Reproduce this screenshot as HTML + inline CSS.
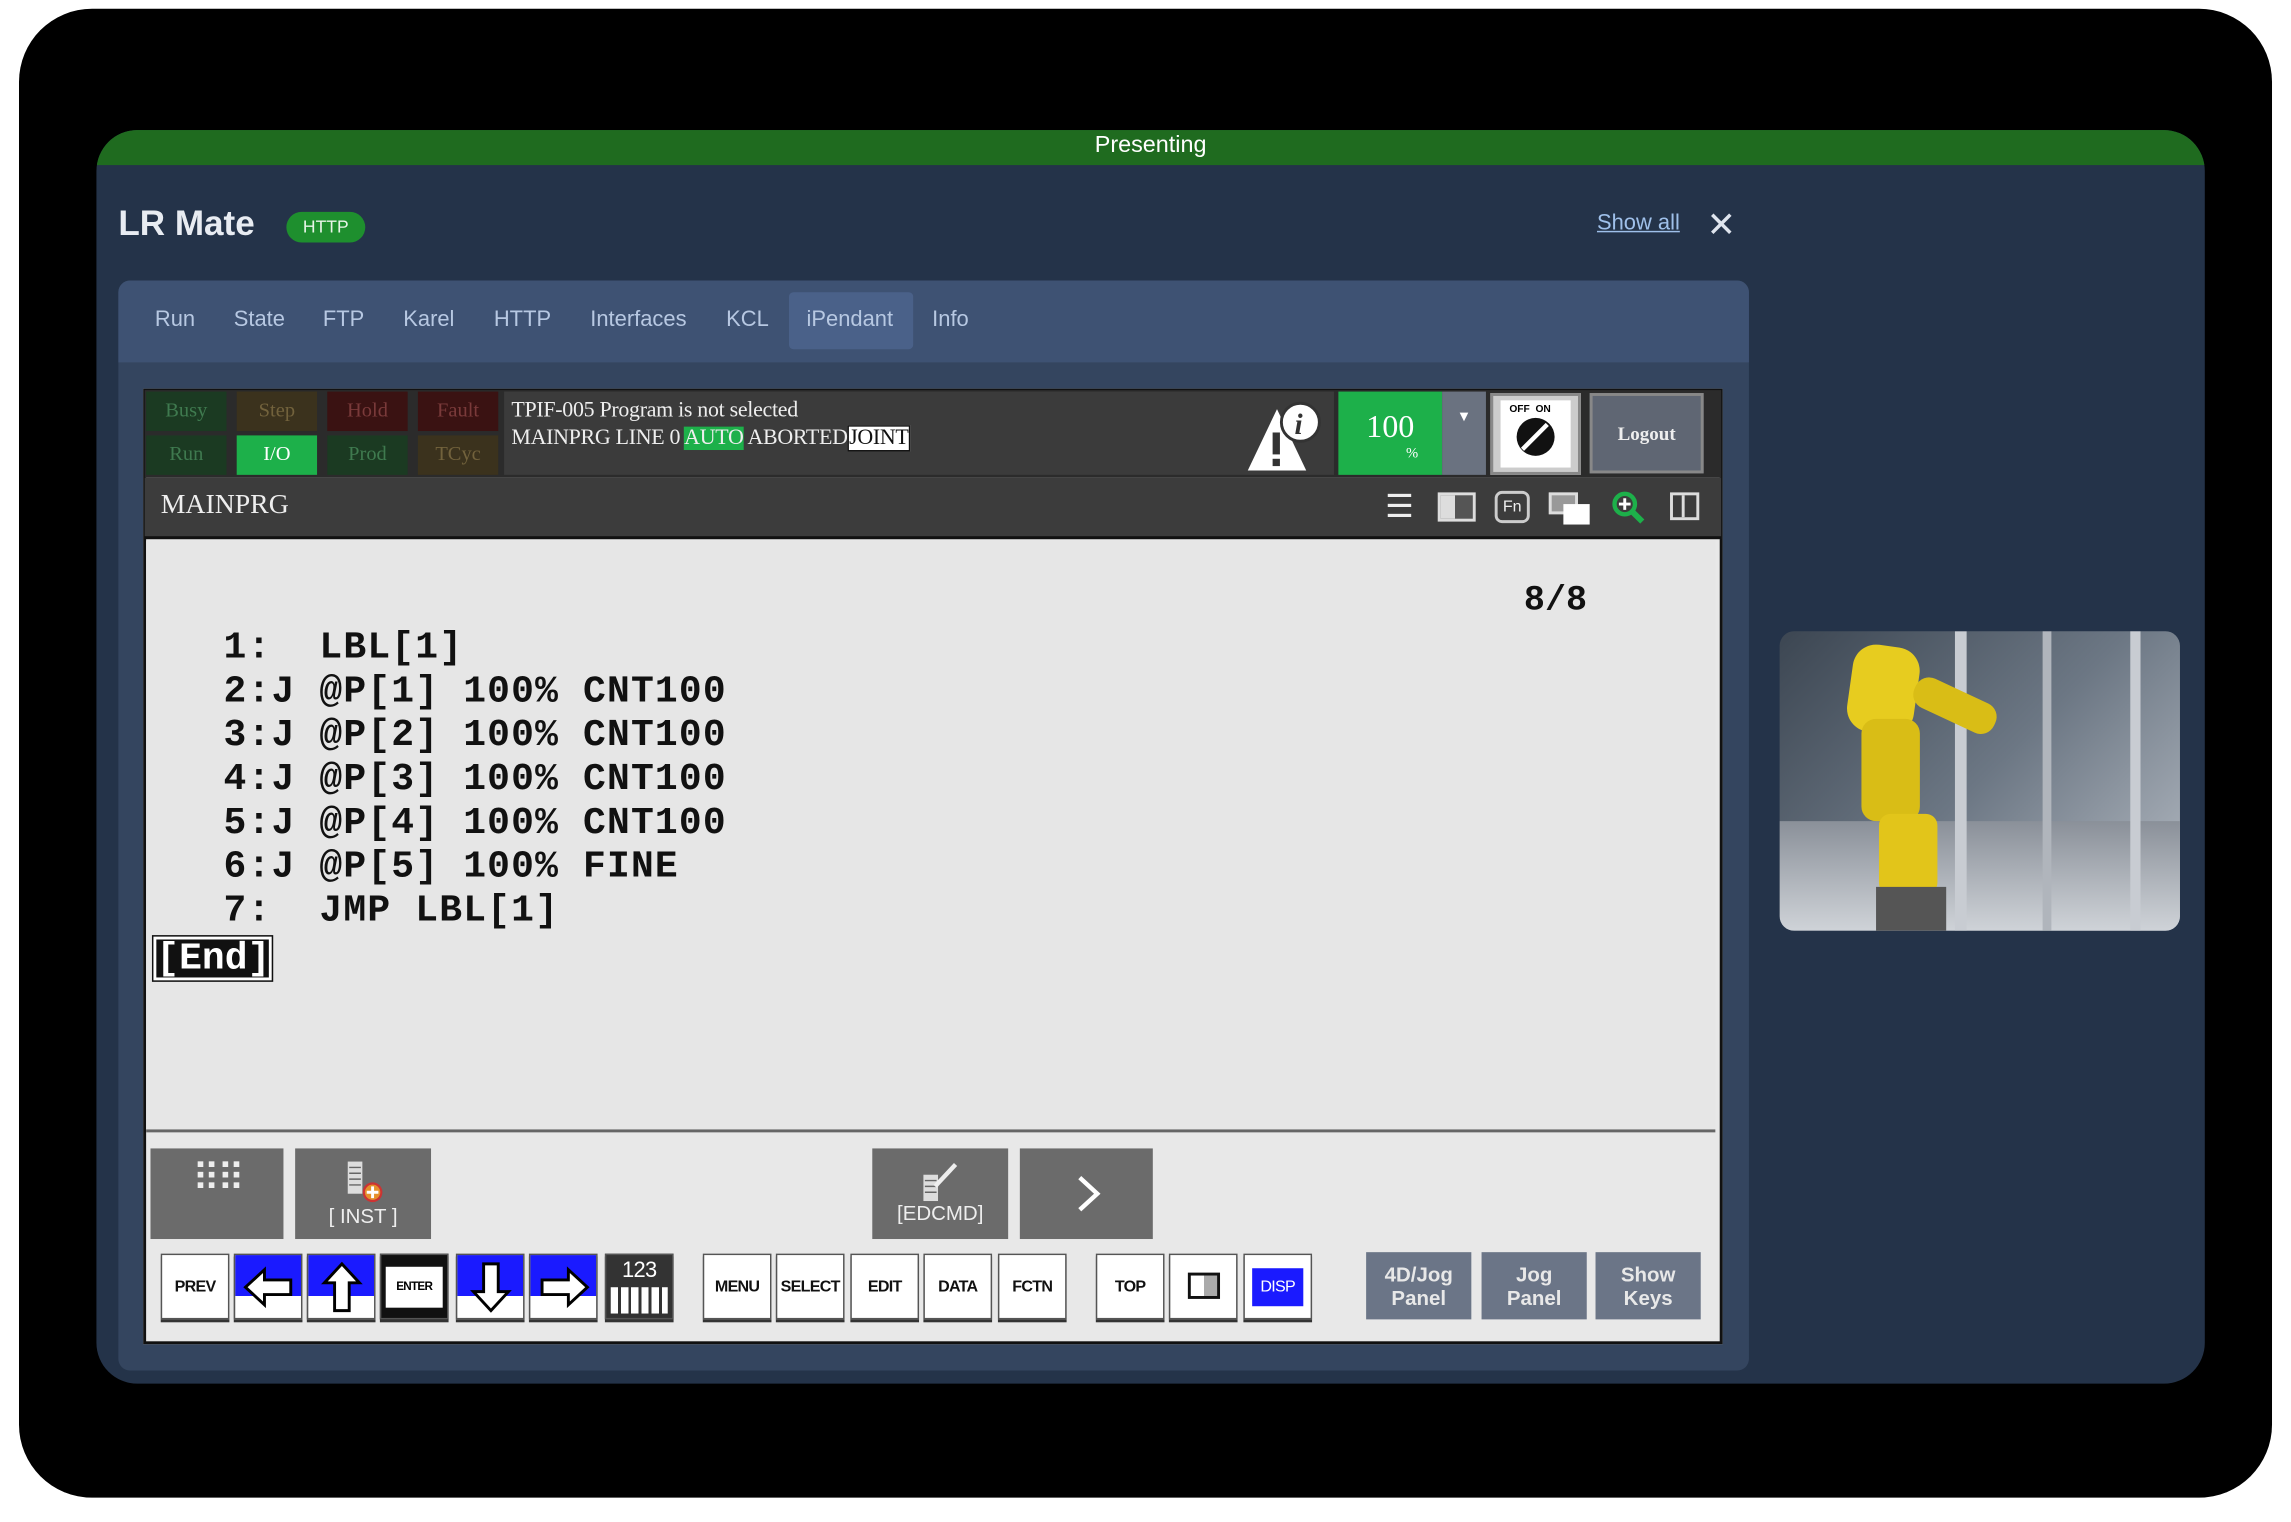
<!DOCTYPE html>
<html><head><meta charset="utf-8"><style>
*{box-sizing:border-box;margin:0;padding:0}
html,body{width:2291px;height:1522px;overflow:hidden;background:#fff}
#w{position:absolute;left:0;top:0;width:1568px;height:1042px;transform:scale(1.46110);transform-origin:0 0;font-family:"Liberation Sans",sans-serif}
.a{position:absolute}
.sb{position:absolute;width:55px;height:27px;font-family:"Liberation Serif",serif;font-size:14px;text-align:center;line-height:27px}
.k{position:absolute;top:858px;width:47px;height:45px;background:#fff;border:1px solid #555;box-shadow:0 2px 0 #333;font-size:11px;font-weight:bold;text-align:center;line-height:45px;color:#111;letter-spacing:-0.5px}
.gb{position:absolute;top:857px;height:46px;width:72px;background:#6b7587;color:#e8e8e8;font-size:14px;font-weight:bold;text-align:center;line-height:16px;padding-top:7px}
.bb{position:absolute;top:786px;height:62px;background:#6b6b6b;color:#eee;text-align:center}
.code{position:absolute;left:153px;font-family:"Liberation Mono",monospace;font-weight:bold;font-size:26px;letter-spacing:0.8px;color:#111;white-space:pre;line-height:30px}
</style></head><body><div id="w">
<div class="a" style="left:13px;top:6px;width:1542px;height:1019px;background:#000;border-radius:50px"></div>
<div class="a" style="left:66px;top:89px;width:1443px;height:858px;background:#243349;border-radius:28px;overflow:hidden">
 <div class="a" style="left:0;top:0;width:1443px;height:24px;background:#1f6b1f;color:#fff;font-size:16px;text-align:center;line-height:22px">Presenting</div>
</div>
<div class="a" style="left:81px;top:140px;color:#e8ecf2;font-size:24px;font-weight:bold">LR Mate</div>
<div class="a" style="left:196px;top:145px;width:54px;height:21px;background:#1e8f2e;border-radius:11px;color:#e8f5e8;font-size:12px;text-align:center;line-height:21px">HTTP</div>
<div class="a" style="left:1093px;top:144px;color:#9fc0ea;font-size:15px;text-decoration:underline">Show all</div>
<div class="a" style="left:1168px;top:140px;color:#dfe5ee;font-size:24px">✕</div>
<div class="a" style="left:81px;top:192px;width:1116px;height:746px;background:#34455f;border-radius:8px"></div>
<div class="a" style="left:81px;top:192px;width:1116px;height:56px;background:#3e5273;border-radius:8px 8px 0 0"></div>
<div class="a" style="left:540px;top:200px;width:85px;height:39px;background:#4a6189;border-radius:3px"></div>
<div class="a" style="left:106px;top:210px;color:#b7c8e2;font-size:15px;word-spacing:0">
<span class="a" style="left:0">Run</span><span class="a" style="left:54px">State</span><span class="a" style="left:115px">FTP</span><span class="a" style="left:170px">Karel</span><span class="a" style="left:232px">HTTP</span><span class="a" style="left:298px">Interfaces</span><span class="a" style="left:391px">KCL</span><span class="a" style="left:446px">iPendant</span><span class="a" style="left:532px">Info</span></div>

<div class="a" style="left:98px;top:266px;width:1081px;height:654px;background:#e8e8e8;border:2px solid #111"></div>
<div class="a" style="left:99px;top:267px;width:1079px;height:60px;background:#2b2b2b"></div>
<div class="sb" style="left:100px;top:268px;background:#1b3a22;color:#3f7a4f">Busy</div>
<div class="sb" style="left:162px;top:268px;background:#3b321d;color:#72623c">Step</div>
<div class="sb" style="left:224px;top:268px;background:#3a1212;color:#7a3a3a">Hold</div>
<div class="sb" style="left:286px;top:268px;background:#3a1212;color:#7a3a3a">Fault</div>
<div class="sb" style="left:100px;top:298px;background:#1b3a22;color:#3f7a4f">Run</div>
<div class="sb" style="left:162px;top:298px;background:#1db04a;color:#fff">I/O</div>
<div class="sb" style="left:224px;top:298px;background:#1b3a22;color:#3f7a4f">Prod</div>
<div class="sb" style="left:286px;top:298px;background:#3b321d;color:#72623c">TCyc</div>
<div class="a" style="left:345px;top:268px;width:568px;height:57px;background:#3b3b3b"></div>
<div class="a" style="left:350px;top:272px;color:#eee;font-family:'Liberation Serif',serif;font-size:15px;line-height:19px;white-space:nowrap;letter-spacing:-0.2px">TPIF-005 Program is not selected<br>MAINPRG LINE 0 <span style="background:#1db04a">AUTO</span> ABORTED<span style="background:#fff;color:#111;border:1px solid #111">JOINT</span></div>
<svg class="a" style="left:850px;top:272px" width="58" height="52"><polygon points="24,8 44,50 4,50" fill="#fff"/><rect x="21" y="24" width="5" height="15" fill="#333"/><rect x="21" y="42" width="5" height="5" fill="#333"/><circle cx="40" cy="17" r="13" fill="#fff" stroke="#333" stroke-width="2"/><text x="36" y="25" font-family="Liberation Serif" font-style="italic" font-weight="bold" font-size="20" fill="#333">i</text></svg>
<div class="a" style="left:916px;top:268px;width:71px;height:57px;background:#1db04a;color:#fff;font-family:'Liberation Serif',serif;text-align:center"><div style="font-size:22px;margin-top:11px">100</div><div style="font-size:10px;margin-left:30px">%</div></div>
<div class="a" style="left:987px;top:268px;width:30px;height:57px;background:#6a7280;color:#fff;font-size:10px;text-align:center;padding-top:12px">▼</div>
<div class="a" style="left:1020px;top:269px;width:62px;height:56px;background:#ccc;border:2px solid #888"><div style="position:absolute;left:5px;top:3px;width:48px;height:46px;background:#fff"></div><div style="position:absolute;left:11px;top:6px;font-size:7px;font-weight:bold">OFF &nbsp;ON</div><div style="position:absolute;left:16px;top:15px;width:26px;height:26px;border-radius:50%;background:#111"></div><div style="position:absolute;left:27px;top:16px;width:3px;height:24px;background:#fff;transform:rotate(45deg)"></div></div>
<div class="a" style="left:1088px;top:269px;width:78px;height:55px;background:#5f6673;border:2px solid #888;color:#eee;font-family:'Liberation Serif',serif;font-weight:bold;font-size:13px;text-align:center;line-height:52px">Logout</div>
<div class="a" style="left:99px;top:327px;width:1079px;height:42px;background:#3c3c3c;border-bottom:2px solid #111"></div>
<div class="a" style="left:110px;top:335px;color:#eee;font-family:'Liberation Serif',serif;font-size:19px">MAINPRG</div>
<div class="a" style="left:948px;top:334px;color:#eee;font-size:22px">☰</div>
<div class="a" style="left:984px;top:337px;width:26px;height:20px;border:2px solid #ddd;background:linear-gradient(90deg,#ddd 45%,#555 45%)"></div>
<div class="a" style="left:1023px;top:336px;width:24px;height:22px;border:2px solid #ccc;border-radius:5px;color:#eee;font-size:11px;text-align:center;line-height:18px">Fn</div>
<div class="a" style="left:1060px;top:337px;width:20px;height:15px;background:#999;border:2px solid #ddd"></div><div class="a" style="left:1070px;top:345px;width:18px;height:14px;background:#fff"></div>
<svg class="a" style="left:1102px;top:335px" width="24" height="24"><circle cx="10" cy="10" r="7" fill="none" stroke="#1db04a" stroke-width="3"/><line x1="15" y1="15" x2="22" y2="22" stroke="#1db04a" stroke-width="4"/><path d="M10 6v8M6 10h8" stroke="#fff" stroke-width="2"/></svg>
<div class="a" style="left:1143px;top:337px;width:20px;height:19px;border:2px solid #ddd;border-left-width:2px"><div style="position:absolute;left:6px;top:0;width:2px;height:15px;background:#ddd"></div></div>
<div class="a" style="left:100px;top:370px;width:1074px;height:405px;background:#e6e6e6;border-bottom:2px solid #666"></div>
<div class="a" style="left:1043px;top:398px;font-family:'Liberation Mono',monospace;font-weight:bold;font-size:24px;color:#111">8/8</div>
<div class="code" style="top:428px">1:  LBL[1]
2:J @P[1] 100% CNT100
3:J @P[2] 100% CNT100
4:J @P[3] 100% CNT100
5:J @P[4] 100% CNT100
6:J @P[5] 100% FINE
7:  JMP LBL[1]</div>
<div class="a" style="left:105px;top:641px;width:81px;height:30px;background:#111;border:2px solid #fff;outline:1px solid #111;color:#fff;font-family:'Liberation Mono',monospace;font-weight:bold;font-size:26px;line-height:27px;text-align:center">[End]</div>
<div class="bb" style="left:103px;width:91px;font-size:26px;line-height:40px;letter-spacing:-2px">⠿⠿</div>
<div class="bb" style="left:202px;width:93px;font-size:14px;padding-top:38px">[ INST ]</div>
<svg class="a" style="left:234px;top:793px" width="30" height="32"><rect x="4" y="2" width="10" height="22" fill="#ddd"/><path d="M5 6h8M5 10h8M5 14h8M5 18h8" stroke="#666"/><circle cx="21" cy="23" r="6" fill="#e5902b" stroke="#c33" stroke-width="1.5"/><path d="M21 19v8M17 23h8" stroke="#fff" stroke-width="2"/></svg>
<div class="bb" style="left:597px;width:93px;font-size:14px;padding-top:36px">[EDCMD]</div>
<svg class="a" style="left:630px;top:794px" width="30" height="30"><rect x="2" y="10" width="10" height="18" fill="#ddd"/><path d="M3 14h8M3 18h8M3 22h8" stroke="#666"/><path d="M10 18L24 3" stroke="#eee" stroke-width="3"/></svg>
<div class="bb" style="left:698px;width:91px"><svg width="30" height="62"><path d="M10 20l12 11l-12 11" fill="none" stroke="#fff" stroke-width="3"/></svg></div>
<div class="k" style="left:110px">PREV</div>
<div class="k" style="left:160px;background:linear-gradient(#1a1aff 65%,#fff 65%)"><svg width="46" height="44"><path d="M7 22l13-12v7h18v10h-18v7z" fill="#fff" stroke="#000" stroke-width="2"/></svg></div>
<div class="k" style="left:210px;background:linear-gradient(#1a1aff 65%,#fff 65%)"><svg width="46" height="44"><path d="M23 6l12 13h-7v19h-10v-19h-7z" fill="#fff" stroke="#000" stroke-width="2"/></svg></div>
<div class="k" style="left:260px;background:#111;color:#fff;font-size:8px"><div style="margin:8px 3px;height:28px;background:#fff;color:#000;line-height:28px">ENTER</div></div>
<div class="k" style="left:312px;background:linear-gradient(#1a1aff 65%,#fff 65%)"><svg width="46" height="44"><path d="M23 38l12-13h-7v-19h-10v19h-7z" fill="#fff" stroke="#000" stroke-width="2"/></svg></div>
<div class="k" style="left:362px;background:linear-gradient(#1a1aff 65%,#fff 65%)"><svg width="46" height="44"><path d="M39 22l-13-12v7h-18v10h18v7z" fill="#fff" stroke="#000" stroke-width="2"/></svg></div>
<div class="k" style="left:414px;background:#333;color:#fff;font-size:15px;line-height:22px;font-weight:normal">123<div style="height:18px;margin:0 3px;background:repeating-linear-gradient(90deg,#fff 0 5px,#333 5px 7px)"></div></div>
<div class="k" style="left:481px">MENU</div><div class="k" style="left:531px">SELECT</div><div class="k" style="left:582px">EDIT</div><div class="k" style="left:632px">DATA</div><div class="k" style="left:683px">FCTN</div>
<div class="k" style="left:750px">TOP</div>
<div class="k" style="left:800px"><div style="margin:12px auto;width:22px;height:18px;border:2px solid #111;background:linear-gradient(90deg,#fff 50%,#aaa 50%)"></div></div>
<div class="k" style="left:851px"><div style="margin:9px 5px;height:26px;background:#1a1aff;color:#fff;line-height:26px;font-weight:normal">DISP</div></div>
<div class="gb" style="left:935px">4D/Jog<br>Panel</div><div class="gb" style="left:1014px">Jog<br>Panel</div><div class="gb" style="left:1092px">Show<br>Keys</div>

<div class="a" style="left:1218px;top:432px;width:274px;height:205px;border-radius:10px;overflow:hidden;background:linear-gradient(135deg,#3c4652,#6c7784 50%,#b8bec6)">
 <div class="a" style="left:0;top:130px;width:274px;height:75px;background:linear-gradient(#8a9099,#cfd3d8)"></div>
 <div class="a" style="left:120px;top:0;width:8px;height:205px;background:#c8ccd2"></div>
 <div class="a" style="left:180px;top:0;width:6px;height:205px;background:#b0b5bc"></div>
 <div class="a" style="left:240px;top:0;width:7px;height:205px;background:#c8ccd2"></div>
 <div class="a" style="left:48px;top:10px;width:46px;height:60px;background:#e7cc1f;border-radius:16px;transform:rotate(8deg)"></div>
 <div class="a" style="left:56px;top:60px;width:40px;height:70px;background:#d9bd16;border-radius:10px"></div>
 <div class="a" style="left:68px;top:125px;width:40px;height:55px;background:#e2c51a;border-radius:8px"></div>
 <div class="a" style="left:90px;top:40px;width:60px;height:22px;background:#d9bd16;border-radius:10px;transform:rotate(25deg)"></div>
 <div class="a" style="left:66px;top:175px;width:48px;height:30px;background:#555"></div>
</div>
</div></body></html>
